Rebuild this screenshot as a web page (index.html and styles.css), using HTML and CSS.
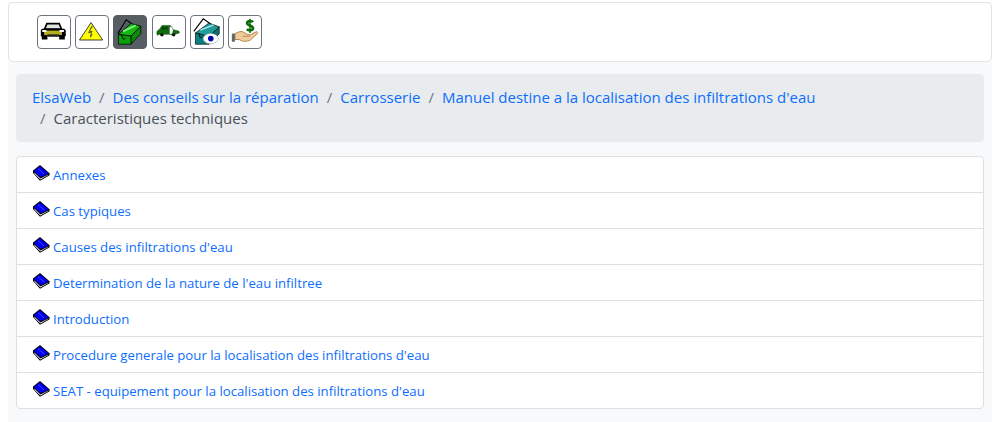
FILE: index.html
```html
<!DOCTYPE html>
<html lang="fr">
<head>
<meta charset="utf-8">
<title>ElsaWeb</title>
<link rel="stylesheet" href="styles.css">
</head>
<body>
<svg class="defs" width="0" height="0" aria-hidden="true">
  <symbol id="book" viewBox="0 0 17 16">
    <path d="M7 0 16.800 8.400 16.300 10.400 7 15.800 0 8V5.500z" fill="#000"/>
    <path d="M7 1.200 15.500 8.500 7.500 12.300 1 6z" fill="#0000f0"/>
    <path d="M1.300 7.400 7.500 13.400 15.500 9.400 15.300 10 7.400 14.500 1.300 8.400z" fill="#fff"/>
    <path d="M5 3.500l6.500 5.800" stroke="#5050ff" stroke-width=".8" fill="none"/>
  </symbol>
</svg>
<main class="page">
  <section class="toolbar">
    <button class="tool" type="button" aria-label="Véhicule">
      <svg viewBox="0 0 34 34"><path d="M7 14 9.500 8h13l2.500 6z" fill="#dfe3df" stroke="#000" stroke-width="1.800"/><path d="M5 13.500h22c1.500 0 2.500 1 2.500 2.500v5.500H3V16c0-1.500.5-2.500 2-2.500z" fill="#000"/><path d="M6.500 15.500h19v5h-19z" fill="#b5ac20"/><path d="M4.500 15h4.500v2H4.500zM23 15h4.500v2H23z" fill="#fff"/><path d="M4 20.500h6V25H4zM22.500 20.500h6V25h-6z" fill="#000"/><path d="M10 19.500h12.500V22H10z" fill="#222"/></svg>
    </button>
    <button class="tool" type="button" aria-label="Électricité">
      <svg viewBox="0 0 34 34"><path d="M16 7 28.300 25.500H3.700z" fill="#ffff00" stroke="#333" stroke-width="1"/><path d="M17.500 11l-3.300 5.500 3-.5-1.300 3.500 1.300.2-1.700 3-.200-2.700.8.100.5-2.800-3.300.7 2.800-6.500z" fill="#444" stroke="#444" stroke-width=".5"/></svg>
    </button>
    <button class="tool tool-active" type="button" aria-label="Carrosserie">
      <svg viewBox="0 0 34 34"><path d="M4 18.700 13 4l6 4.500" fill="none" stroke="#000" stroke-width="1.200"/><path d="M4.700 19.700 18 8l10.500 2.700L18 21.300z" fill="#15b515" stroke="#000" stroke-width=".8"/><path d="M9.700 16.300 23 10" stroke="#7cf07c" stroke-width="2"/><path d="M18 21.300 28.500 10.700v8L18 30z" fill="#0b8a0b" stroke="#000" stroke-width=".8"/><path d="M4.700 19.700 18 21.300V30H4.700z" fill="#0aa00a" stroke="#000" stroke-width=".8"/><path d="M8 19.700l1.700 5 2.300-.7" fill="none" stroke="#000" stroke-width="1"/></svg>
    </button>
    <button class="tool" type="button" aria-label="Carrosserie nue">
      <svg viewBox="0 0 34 34"><path d="M4 18.500c0-2.500 1-3.500 3-4.500l2.500-4h9l3 4.500 6 1.500.5 2-5 1.500c-1 1.500-3 1.500-4 0h-7.500c-1 1.500-3.500 1.500-4.500 0L4.500 20.500z" fill="#0c6e0c" stroke="#074007" stroke-width=".5"/><path d="M17.500 11.500h2.500l1.500 3.500-1 4h-3z" fill="#fff" stroke="#444" stroke-width=".4"/><path d="M10 11.500h2.500v3H9zM13.500 11.500h2v3h-2z" fill="#074007"/><circle cx="9.500" cy="20" r="1.800" fill="#111"/><circle cx="22" cy="20" r="1.800" fill="#111"/></svg>
    </button>
    <button class="tool" type="button" aria-label="Inspection">
      <svg viewBox="0 0 34 34"><path d="M3 16.300 13 3l8.300 5.700" fill="none" stroke="#000" stroke-width="1.200"/><path d="M4.700 18 19 7.500l11 4L19 22z" fill="#1f9d9d" stroke="#000" stroke-width=".7"/><path d="M10 15 24 9.500" stroke="#b6eaea" stroke-width="1.300"/><path d="M4.700 18 19 22v8H4.700z" fill="#0b8080" stroke="#000" stroke-width=".7"/><path d="M19 22 30 11.500V19L19 30z" fill="#0a6f6f" stroke="#000" stroke-width=".7"/><path d="M8 18l1.700 5 2.300-.7" fill="none" stroke="#000"/><ellipse cx="21" cy="24" rx="8" ry="5.500" fill="#fff" stroke="#999" stroke-width=".6"/><circle cx="21" cy="24" r="3" fill="#0000c8"/><circle cx="21" cy="24" r="1" fill="#000"/></svg>
    </button>
    <button class="tool" type="button" aria-label="Coût">
      <svg viewBox="0 0 34 34"><path d="M25.500 6.500c-1-1.500-6-1.800-6.300 1 0 3.200 6.300 1.800 6.300 5.500 0 2.700-5 2.700-6.500 1" fill="none" stroke="#0a6b0a" stroke-width="2.800"/><path d="M22.300 3v15" stroke="#0a6b0a" stroke-width="1.600"/><path d="M6.300 19c3-2.500 7-3 9-2l4 2.500 3.500.5 6.500-3.500c1 .5 1 1.500.5 2.500l-7 6.500c-4 2-8 2-12-.5H6.300z" fill="#f0cc9c" stroke="#a06a20" stroke-width=".8"/><path d="M3 18.700h3.300v8.600H3z" fill="#5f6a70"/><path d="M14.500 21.500h8" stroke="#a06a20" stroke-width=".7"/></svg>
    </button>
  </section>

  <nav class="crumbs" aria-label="Fil d'Ariane">
    <a href="#">ElsaWeb</a><span class="sep">/</span><a href="#">Des conseils sur la réparation</a><span class="sep">/</span><a href="#">Carrosserie</a><span class="sep">/</span><a href="#">Manuel destine a la localisation des infiltrations d'eau</a>
    <span class="last"><span class="sep">/</span><span class="current">Caracteristiques techniques</span></span>
  </nav>

  <ul class="list">
    <li class="row"><svg class="book"><use href="#book"/></svg><a href="#">Annexes</a></li>
    <li class="row"><svg class="book"><use href="#book"/></svg><a href="#">Cas typiques</a></li>
    <li class="row"><svg class="book"><use href="#book"/></svg><a href="#">Causes des infiltrations d'eau</a></li>
    <li class="row"><svg class="book"><use href="#book"/></svg><a href="#">Determination de la nature de l'eau infiltree</a></li>
    <li class="row"><svg class="book"><use href="#book"/></svg><a href="#">Introduction</a></li>
    <li class="row"><svg class="book"><use href="#book"/></svg><a href="#">Procedure generale pour la localisation des infiltrations d'eau</a></li>
    <li class="row"><svg class="book"><use href="#book"/></svg><a href="#">SEAT - equipement pour la localisation des infiltrations d'eau</a></li>
  </ul>
</main>
</body>
</html>
```
FILE: styles.css
```css
* { box-sizing: border-box; }
html, body { margin: 0; height: 100%; }
body {
  background: #fff;
  padding: 2px 5px 0 8px;
  font-family: "Open Sans", "Noto Sans", sans-serif;
  color: #212529;
  overflow: hidden;
}
.defs { display: block; height: 0; }
.page {
  background: #f8f9fa;
  height: 420px;
  display: flex;
  flex-direction: column;
}
.toolbar {
  height: 60px;
  background: #fff;
  border: 1px solid #e2e3e6;
  border-radius: 5px;
  display: flex;
  align-items: center;
  gap: 4.200px;
  padding: 0 0 0 28px;
}
.tool {
  width: 34px;
  height: 34px;
  padding: 0;
  border: 1px solid #6c757d;
  border-radius: 4px;
  background: #fff;
  display: flex;
}
.tool svg { width: 32px; height: 32px; display: block; }
.tool-active { background: #565e64; border-color: #565e64; }
.crumbs {
  margin: 12px 8px 0;
  height: 68px;
  padding: 13px 16px 0;
  background: #e9ecef;
  border-radius: 4px;
  font-size: 15px;
  line-height: 21px;
  color: #6c757d;
}
.crumbs a { color: #0d6efd; text-decoration: none; }
.sep { padding: 0 8px; }
.last { display: inline-block; }
.current { color: #495057; }
.list {
  list-style: none;
  margin: 14px 8px 0;
  padding: 0;
  background: #fff;
  border: 1px solid #dfdfdf;
  border-radius: 4px;
}
.row {
  height: 36px;
  padding: 0 16px;
  display: flex;
  align-items: center;
  border-top: 1px solid #dfdfdf;
  font-size: 13.200px;
}
.row:first-child { border-top: 0; height: 35px; }
.row a { color: #0d6efd; text-decoration: none; }
.book { width: 17px; height: 16px; margin: -4px 3px 0 0; flex: none; }
```
